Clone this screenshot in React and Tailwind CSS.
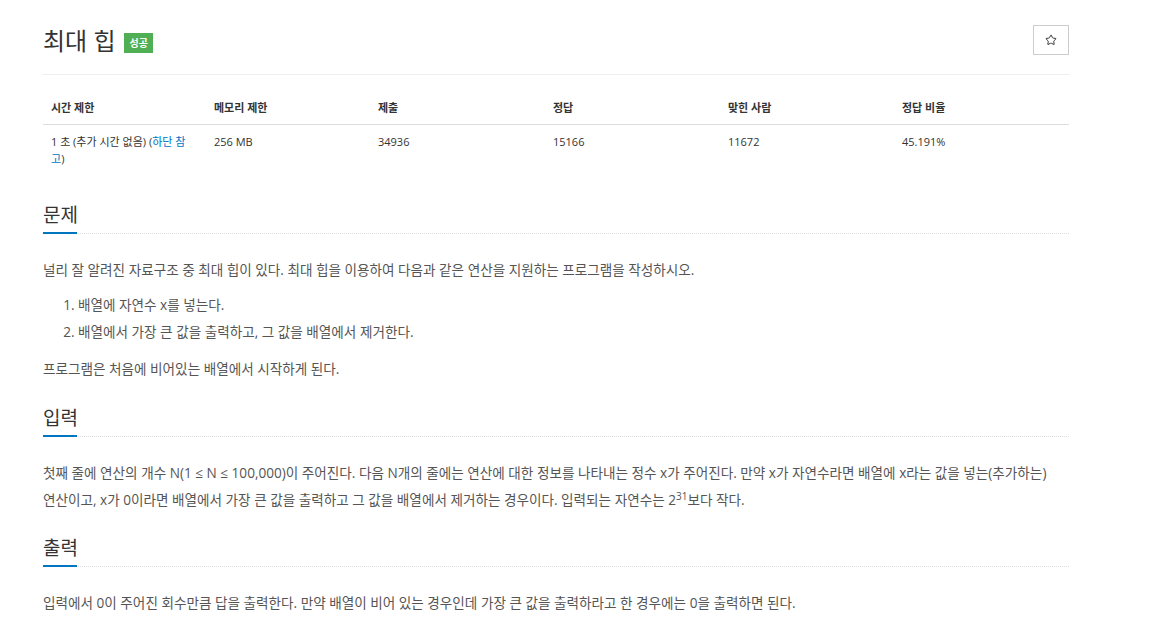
import { Star } from "lucide-react";

const cols = [
    { label: "시간 제한", w: "w-[163px]" },
    { label: "메모리 제한", w: "w-[164px]" },
    { label: "제출", w: "w-[175px]" },
    { label: "정답", w: "w-[175px]" },
    { label: "맞힌 사람", w: "w-[174px]" },
    { label: "정답 비율", w: "flex-1" },
];

function SectionHead({ title }) {
    return (
        <div className="relative border-b border-dotted border-[#ddd] pb-[4px]">
            <h2 className="text-[19px] leading-[28px] text-[#333]">{title}</h2>
            <div className="absolute left-0 bottom-[-1px] w-[34px] h-[2px] bg-[#0076c0]" />
        </div>
    );
}

export default function App() {
    return (
        <div className="min-h-[637px] bg-white font-['Open_Sans','Noto_Sans_CJK_KR',sans-serif]">
            <div className="ml-[43px] w-[1026px] pt-[24px]">

                {/* Title */}
                <div className="flex items-center justify-between border-b border-[#eee] pb-[18px]">
                    <div className="flex items-center gap-[9px] pt-[2px]">
                        <h1 className="text-[24px] leading-[30px] text-[#333]">최대 힙</h1>
                        <span className="mt-[4px] px-[5px] h-[20px] flex items-center text-[10px] font-bold text-white bg-[#50ae54]">
                            성공
                        </span>
                    </div>
                    <button className="w-[36px] h-[30px] border border-[#ccc] flex items-center justify-center text-[#333]">
                        <Star size={12} strokeWidth={2} />
                    </button>
                </div>

                {/* Info table */}
                <div className="mt-[16px] text-[11px] text-[#333]">
                    <div className="flex border-b border-[#ddd]">
                        {cols.map((c) => (
                            <div key={c.label} className={`${c.w} px-[8px] py-[8px] leading-[17px] font-bold`}>
                                {c.label}
                            </div>
                        ))}
                    </div>
                    <div className="flex">
                        <div className="w-[163px] px-[8px] py-[8px] leading-[17px]">
                            1 초 (추가 시간 없음) (<a className="text-[#0076c0]">하단 참고</a>)
                        </div>
                        <div className="w-[164px] px-[8px] py-[8px] leading-[17px]">256 MB</div>
                        <div className="w-[175px] px-[8px] py-[8px] leading-[17px]">34936</div>
                        <div className="w-[175px] px-[8px] py-[8px] leading-[17px]">15166</div>
                        <div className="w-[174px] px-[8px] py-[8px] leading-[17px]">11672</div>
                        <div className="flex-1 px-[8px] py-[8px] leading-[17px]">45.191%</div>
                    </div>
                </div>

                {/* 문제 */}
                <div className="mt-[26px]">
                    <SectionHead title="문제" />
                    <div className="mt-[22px] text-[13.6px] leading-[27px] text-[#555] break-keep">
                        <p>널리 잘 알려진 자료구조 중 최대 힙이 있다. 최대 힙을 이용하여 다음과 같은 연산을 지원하는 프로그램을 작성하시오.</p>
                        <ol className="list-decimal pl-[35px] mt-[8px]">
                            <li>배열에 자연수 x를 넣는다.</li>
                            <li>배열에서 가장 큰 값을 출력하고, 그 값을 배열에서 제거한다.</li>
                        </ol>
                        <p className="mt-[10px]">프로그램은 처음에 비어있는 배열에서 시작하게 된다.</p>
                    </div>
                </div>

                {/* 입력 */}
                <div className="mt-[22px]">
                    <SectionHead title="입력" />
                    <div className="mt-[22px] text-[13.6px] leading-[27px] text-[#555] break-keep">
                        <p>
                            첫째 줄에 연산의 개수 N(1 ≤ N ≤ 100,000)이 주어진다. 다음 N개의 줄에는 연산에 대한 정보를 나타내는 정수 x가 주어진다. 만약 x가 자연수라면 배열에 x라는 값을 넣는(추가하는) 연산이고, x가 0이라면 배열에서 가장 큰 값을 출력하고 그 값을 배열에서 제거하는 경우이다. 입력되는 자연수는 2<sup className="text-[10px]">31</sup>보다 작다.
                        </p>
                    </div>
                </div>

                {/* 출력 */}
                <div className="mt-[21px]">
                    <SectionHead title="출력" />
                    <div className="mt-[22px] text-[13.6px] leading-[27px] text-[#555] break-keep">
                        <p>입력에서 0이 주어진 회수만큼 답을 출력한다. 만약 배열이 비어 있는 경우인데 가장 큰 값을 출력하라고 한 경우에는 0을 출력하면 된다.</p>
                    </div>
                </div>
            </div>
        </div>
    );
}
